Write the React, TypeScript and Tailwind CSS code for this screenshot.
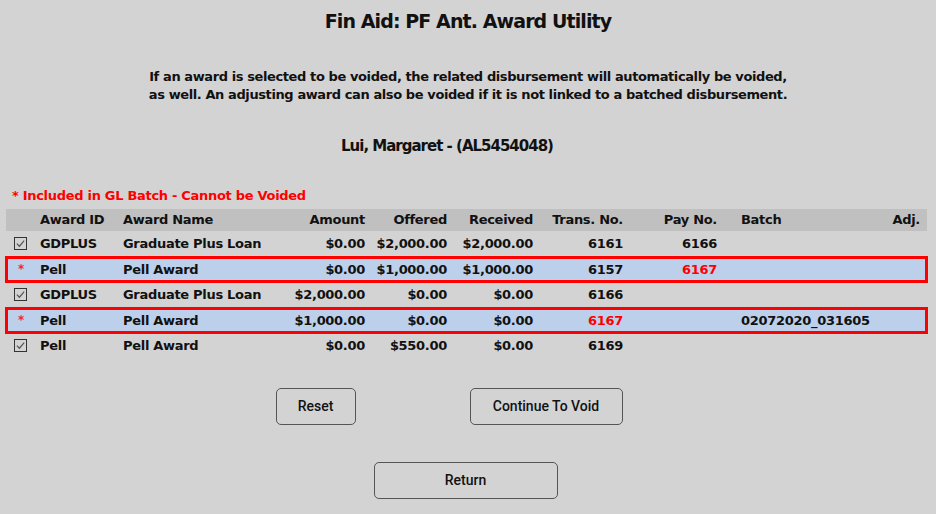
import React from 'react';

type Award = {
  id: string;
  name: string;
  amount: string;
  offered: string;
  received: string;
  trans: string;
  pay: string;
  batch: string;
  locked: boolean;
  redTrans?: boolean;
  redPay?: boolean;
};

const awards: Award[] = [
  { id: 'GDPLUS', name: 'Graduate Plus Loan', amount: '$0.00', offered: '$2,000.00', received: '$2,000.00', trans: '6161', pay: '6166', batch: '', locked: false },
  { id: 'Pell', name: 'Pell Award', amount: '$0.00', offered: '$1,000.00', received: '$1,000.00', trans: '6157', pay: '6167', batch: '', locked: true, redPay: true },
  { id: 'GDPLUS', name: 'Graduate Plus Loan', amount: '$2,000.00', offered: '$0.00', received: '$0.00', trans: '6166', pay: '', batch: '', locked: false },
  { id: 'Pell', name: 'Pell Award', amount: '$1,000.00', offered: '$0.00', received: '$0.00', trans: '6167', pay: '', batch: '02072020_031605', locked: true, redTrans: true },
  { id: 'Pell', name: 'Pell Award', amount: '$0.00', offered: '$550.00', received: '$0.00', trans: '6169', pay: '', batch: '', locked: false },
];

const gothic = { fontFamily: '"Century Gothic", "DejaVu Sans", sans-serif' };
const btnFont = { fontFamily: 'Roboto, "Liberation Sans", sans-serif' };

// column edges copied from the screen: check | id | name | amounts... | batch | adj
const cols = 'grid grid-cols-[34px_83px_167px_75px_82px_86px_90px_94px_1fr_50px] items-center pr-[7px]';

function CheckMark() {
  return (
    <span className="flex h-[13px] w-[13px] items-center justify-center border border-[#333]">
      <svg viewBox="0 0 12 12" className="h-[11px] w-[11px]" fill="none" stroke="#555" strokeWidth="1.3">
        <path d="M2 6.2 L4.8 9 L10 2.8" />
      </svg>
    </span>
  );
}

export default function App() {
  return (
    <div className="min-h-[514px] w-[936px] bg-[#d3d3d3] text-[#111] font-bold" style={gothic}>
      <h1 className="pt-[8px] text-center text-[19px] leading-[26px] tracking-[-0.9px]">Fin Aid: PF Ant. Award Utility</h1>

      <p className="mt-[34px] text-center text-[13px] leading-[18px] tracking-[-0.4px]">
        If an award is selected to be voided, the related disbursement will automatically be voided,
        <br />
        as well. An adjusting award can also be voided if it is not linked to a batched disbursement.
      </p>

      <div className="mt-[32px] pr-[42px] text-center text-[15px] leading-[20px] tracking-[-1px]">Lui, Margaret - (AL5454048)</div>

      <div className="mt-[31px] pl-[12px] text-[13px] leading-[18px] tracking-[-0.3px] text-[#ff0000]">* Included in GL Batch - Cannot be Voided</div>

      <div className="ml-[6px] mt-[4px] w-[921px] text-[13px] tracking-[-0.3px]">
        <div className={`${cols} h-[22px] bg-[#c0c0c0]`}>
          <span />
          <span>Award ID</span>
          <span>Award Name</span>
          <span className="text-right">Amount</span>
          <span className="text-right">Offered</span>
          <span className="text-right">Received</span>
          <span className="text-right">Trans. No.</span>
          <span className="text-right">Pay No.</span>
          <span className="pl-[24px]">Batch</span>
          <span className="text-right">Adj.</span>
        </div>

        {awards.map((a, i) => (
          <div
            key={i}
            className={`${cols} h-[25.5px] ${a.locked ? 'bg-[#bcd0ec] outline-[3px] outline-solid outline-[#ff0000] -outline-offset-[2px]' : ''}`}
          >
            <span className="flex justify-start pl-[8px]">
              {a.locked ? <span className="pl-[4px] text-[12px] leading-none text-[#ff1a3c]">*</span> : <CheckMark />}
            </span>
            <span>{a.id}</span>
            <span>{a.name}</span>
            <span className="text-right">{a.amount}</span>
            <span className="text-right">{a.offered}</span>
            <span className="text-right">{a.received}</span>
            <span className={`text-right ${a.redTrans ? 'text-[#ff0000]' : ''}`}>{a.trans}</span>
            <span className={`text-right ${a.redPay ? 'text-[#ff0000]' : ''}`}>{a.pay}</span>
            <span className="pl-[24px]">{a.batch}</span>
            <span />
          </div>
        ))}
      </div>

      <div className="mt-[29px] flex justify-center gap-[114px] pr-[38px]" style={btnFont}>
        <button className="h-[37px] w-[80px] rounded-[5px] border border-[#555] text-[14px] font-medium">Reset</button>
        <button className="h-[37px] w-[153px] rounded-[5px] border border-[#555] text-[14px] font-medium">Continue To Void</button>
      </div>
      <div className="mt-[37px] flex justify-center pr-[5px]" style={btnFont}>
        <button className="h-[37px] w-[184px] rounded-[5px] border border-[#555] text-[14px] font-medium">Return</button>
      </div>
    </div>
  );
}
